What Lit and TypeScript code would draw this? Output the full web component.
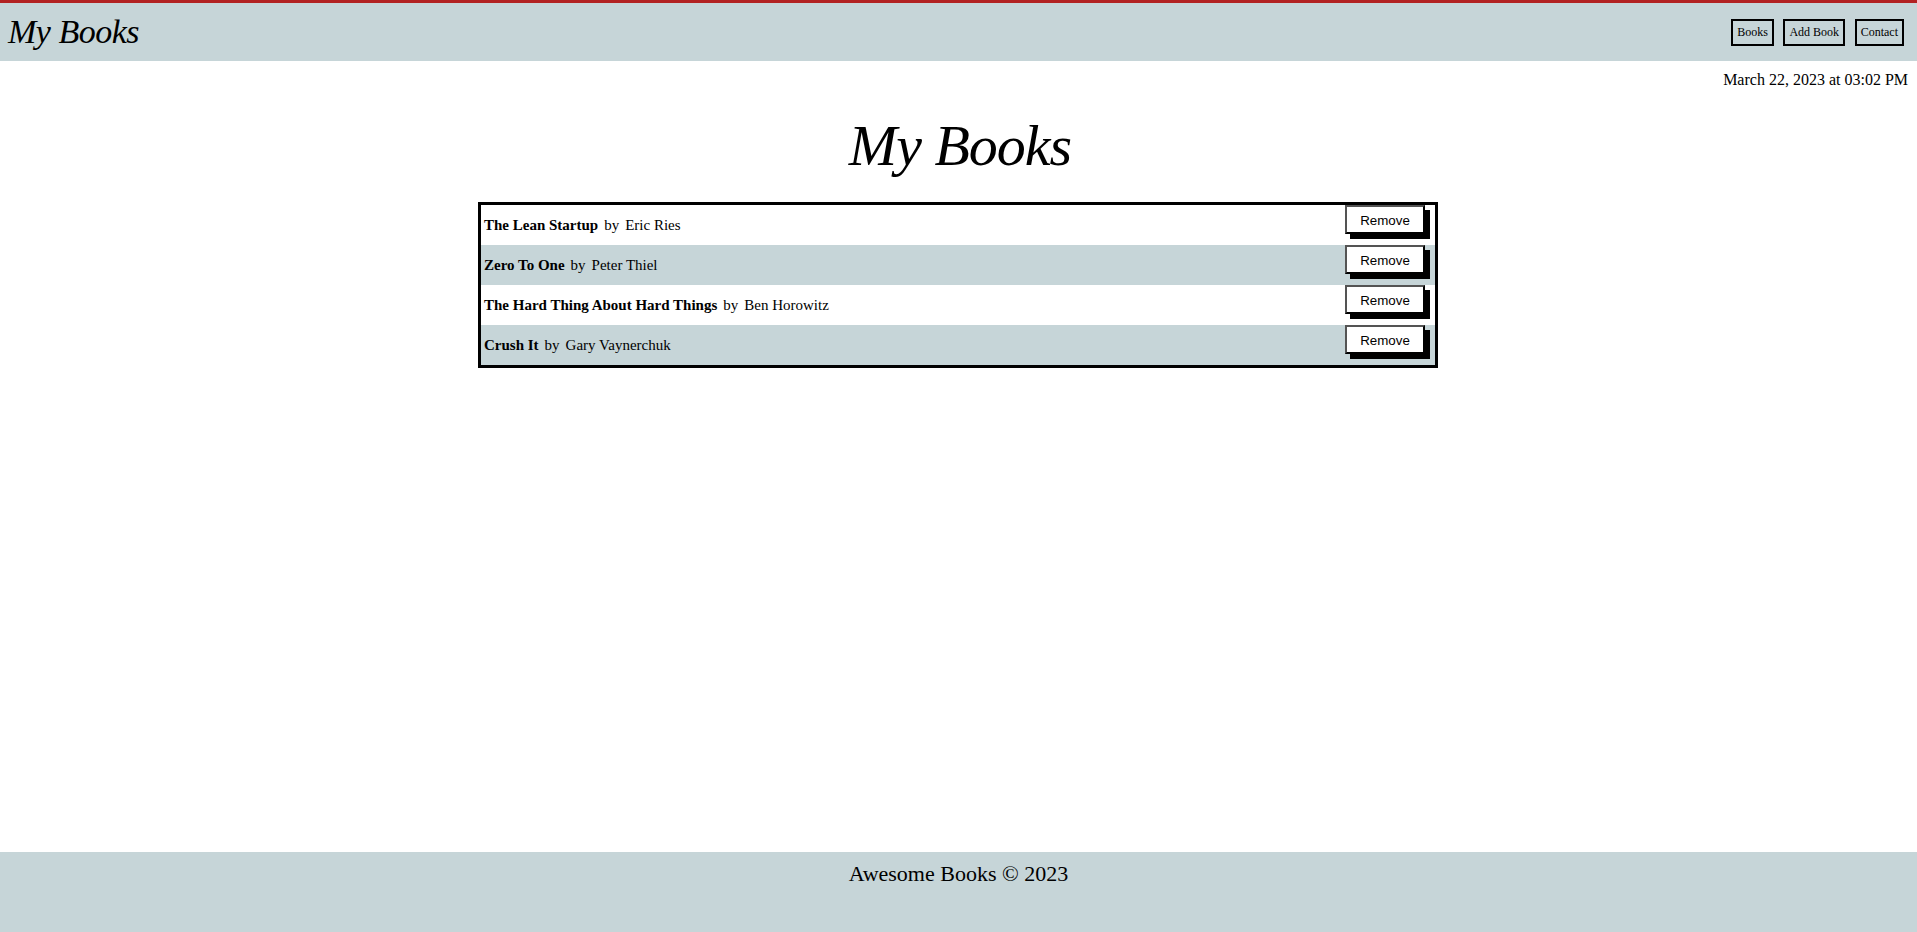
import { LitElement, html, css } from "lit";
import { customElement } from "lit/decorators.js";

const BOOKS = [
  ["The Lean Startup", "Eric Ries"],
  ["Zero To One", "Peter Thiel"],
  ["The Hard Thing About Hard Things", "Ben Horowitz"],
  ["Crush It", "Gary Vaynerchuk"],
];

@customElement("app-root")
export class AppRoot extends LitElement {
  static styles = css`
    :host {
      display: flex;
      flex-direction: column;
      height: 932px;
      font-family: "Liberation Serif", "Times New Roman", serif;
      font-size: 16px;
      color: #000;
      background: #fff;
      overflow: hidden;
    }
    .top {
      display: flex;
      align-items: center;
      justify-content: space-between;
      height: 58px;
      border-top: 3px solid #b22222;
      background: #c6d5d8;
      padding: 0 13px 0 8px;
      flex: none;
    }
    .logo {
      font-size: 34px;
      font-style: italic;
      font-weight: 400;
      letter-spacing: -0.5px;
      line-height: 58px;
      margin: 0;
    }
    nav {
      display: flex;
      gap: 9.6px;
      margin-top: 1px;
    }
    nav a {
      border: 2px solid #000;
      font-size: 12px;
      line-height: 15px;
      padding: 4px;
      color: #000;
      text-decoration: none;
    }
    main {
      flex: 1;
      display: flex;
      flex-direction: column;
      align-items: center;
    }
    .date {
      align-self: stretch;
      text-align: right;
      padding: 10px 9px 0 0;
      line-height: 18px;
    }
    h1 {
      margin: 19px 0 0 3px;
      font-size: 58px;
      line-height: 75px;
      font-style: italic;
      font-weight: 400;
      letter-spacing: -1px;
    }
    .list {
      width: 954px;
      margin-top: 19px;
      border: 3px solid #000;
      box-sizing: content-box;
      margin-right: 1px;
    }
    .row {
      display: flex;
      align-items: flex-start;
      height: 40px;
      padding: 0 10px 0 3px;
    }
    .row:nth-child(even) {
      background: #c6d5d8;
    }
    .text {
      flex: 1;
      display: flex;
      gap: 6px;
      font-size: 15px;
      line-height: 17px;
      padding-top: 12px;
    }
    button {
      width: 80px;
      height: 29px;
      box-sizing: border-box;
      background: #fff;
      border: 2px outset #000;
      box-shadow: 5px 5px 0 #000;
      font-family: "Liberation Sans", Arial, sans-serif;
      font-size: 13.33px;
      padding: 2px 0 0;
      color: #000;
    }
    footer {
      height: 80px;
      flex: none;
      background: #c6d5d8;
      text-align: center;
      font-size: 22px;
      line-height: 28px;
      padding-top: 8px;
      box-sizing: border-box;
    }
  `;

  render() {
    return html`
      <header class="top">
        <p class="logo">My Books</p>
        <nav>
          <a href="#">Books</a>
          <a href="#">Add Book</a>
          <a href="#">Contact</a>
        </nav>
      </header>
      <main>
        <div class="date">March 22, 2023 at 03:02 PM</div>
        <h1>My Books</h1>
        <div class="list">
          ${BOOKS.map(
            ([title, author]) => html`
              <div class="row">
                <div class="text">
                  <b>${title}</b><span>by</span><span>${author}</span>
                </div>
                <button>Remove</button>
              </div>
            `
          )}
        </div>
      </main>
      <footer>Awesome Books © 2023</footer>
    `;
  }
}
